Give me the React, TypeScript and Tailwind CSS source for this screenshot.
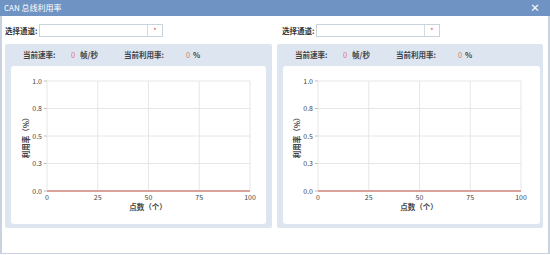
import React from "react";

const font = { fontFamily: '"Noto Sans CJK SC", "Liberation Sans", sans-serif' };

function Chart({ axisX, width }: { axisX: number; width: number }) {
  const top = 15;
  const bottom = 125;
  const right = axisX + 203;
  const xs = [0, 25, 50, 75, 100];
  const ys = [
    { v: "1.0", y: top },
    { v: "0.8", y: top + 27.5 },
    { v: "0.5", y: top + 55 },
    { v: "0.3", y: top + 82.5 },
    { v: "0.0", y: bottom },
  ];
  return (
    <svg width={width} height={154} className="block" style={font}>
      {ys.map((t) => (
        <g key={t.v}>
          <line x1={axisX} x2={right} y1={t.y} y2={t.y} stroke="#e6e6e6" strokeWidth={1} />
          <line x1={axisX - 3} x2={axisX} y1={t.y} y2={t.y} stroke="#bbb" strokeWidth={1} />
          <text x={axisX - 5} y={t.y + 2.5} fontSize={7} fill="#444" textAnchor="end">
            {t.v}
          </text>
        </g>
      ))}
      {xs.map((v, i) => {
        const x = axisX + (i * 203) / 4;
        return (
          <g key={v}>
            <line x1={x} x2={x} y1={top} y2={bottom} stroke="#e6e6e6" strokeWidth={1} />
            <text x={x} y={bottom + 9} fontSize={7} fill="#444" textAnchor="middle">
              {v}
            </text>
          </g>
        );
      })}
      <line x1={axisX} x2={right} y1={bottom} y2={bottom} stroke="#d9a39c" strokeWidth={2} />
      <text
        x={axisX + 101}
        y={bottom + 19}
        fontSize={7.5}
        fontWeight={700}
        fill="#444"
        textAnchor="middle"
      >
        点数（个）
      </text>
      <text
        x={0}
        y={0}
        fontSize={7.5}
        fontWeight={700}
        fill="#444"
        textAnchor="middle"
        transform={`translate(${axisX - 18} ${(top + bottom) / 2}) rotate(-90)`}
      >
        利用率（%）
      </text>
    </svg>
  );
}

function Panel({ axisX, cardW }: { axisX: number; cardW: number }) {
  return (
    <div className="h-[184px] bg-[#dde6f0] rounded-[2px] flex flex-col">
      <div className="h-[22px] flex items-center text-[7.5px] text-[#444] font-bold whitespace-nowrap" style={font}>
        <span className="ml-[18px] w-[48px]">当前速率:</span>
        <span className="w-[9px] text-[#e07a70] font-normal">0</span>
        <span className="w-[44px]">帧/秒</span>
        <span className="w-[62px]">当前利用率:</span>
        <span className="w-[7px] text-[#e07a70] font-normal">0</span>
        <span>%</span>
      </div>
      <div className="ml-[6px] h-[158px] bg-white rounded-[3px]" style={{ width: cardW }}>
        <Chart axisX={axisX} width={cardW} />
      </div>
    </div>
  );
}

function Select() {
  return (
    <div className="h-[13px] w-[124px] border border-[#c9d3de] bg-white flex">
      <div className="flex-1" />
      <div className="w-[15px] border-l border-[#d5dbe2] flex items-center justify-center text-[7px] text-[#e04848] leading-none">
        *
      </div>
    </div>
  );
}

export default function App() {
  return (
    <div className="w-[550px] h-[255px] bg-white relative" style={font}>
      <div className="w-[550px] h-[254px] border-x-2 border-b border-[#c8d3df] flex flex-col">
        <div className="h-[16px] bg-[#6f93c3] flex items-center justify-between -mx-[2px] px-[4px]">
          <span className="text-white text-[8px] leading-none" style={font}>
            CAN 总线利用率
          </span>
          <span className="text-white text-[10px] font-bold leading-none mr-[6px]">×</span>
        </div>
        <div className="flex pt-[7px]">
          <div className="w-[270px] pl-[3px] flex flex-col">
            <div className="flex items-center h-[15px]">
              <span className="text-[7.5px] text-[#333] font-bold w-[34px] whitespace-nowrap">选择通道:</span>
              <Select />
            </div>
            <div className="mt-[6px]">
              <Panel axisX={36} cardW={255} />
            </div>
          </div>
          <div className="w-[266px] ml-[5px] flex flex-col">
            <div className="flex items-center h-[15px] pl-[5px]">
              <span className="text-[7.5px] text-[#333] font-bold w-[34px] whitespace-nowrap">选择通道:</span>
              <Select />
            </div>
            <div className="mt-[6px]">
              <Panel axisX={35} cardW={257} />
            </div>
          </div>
        </div>
      </div>
    </div>
  );
}
